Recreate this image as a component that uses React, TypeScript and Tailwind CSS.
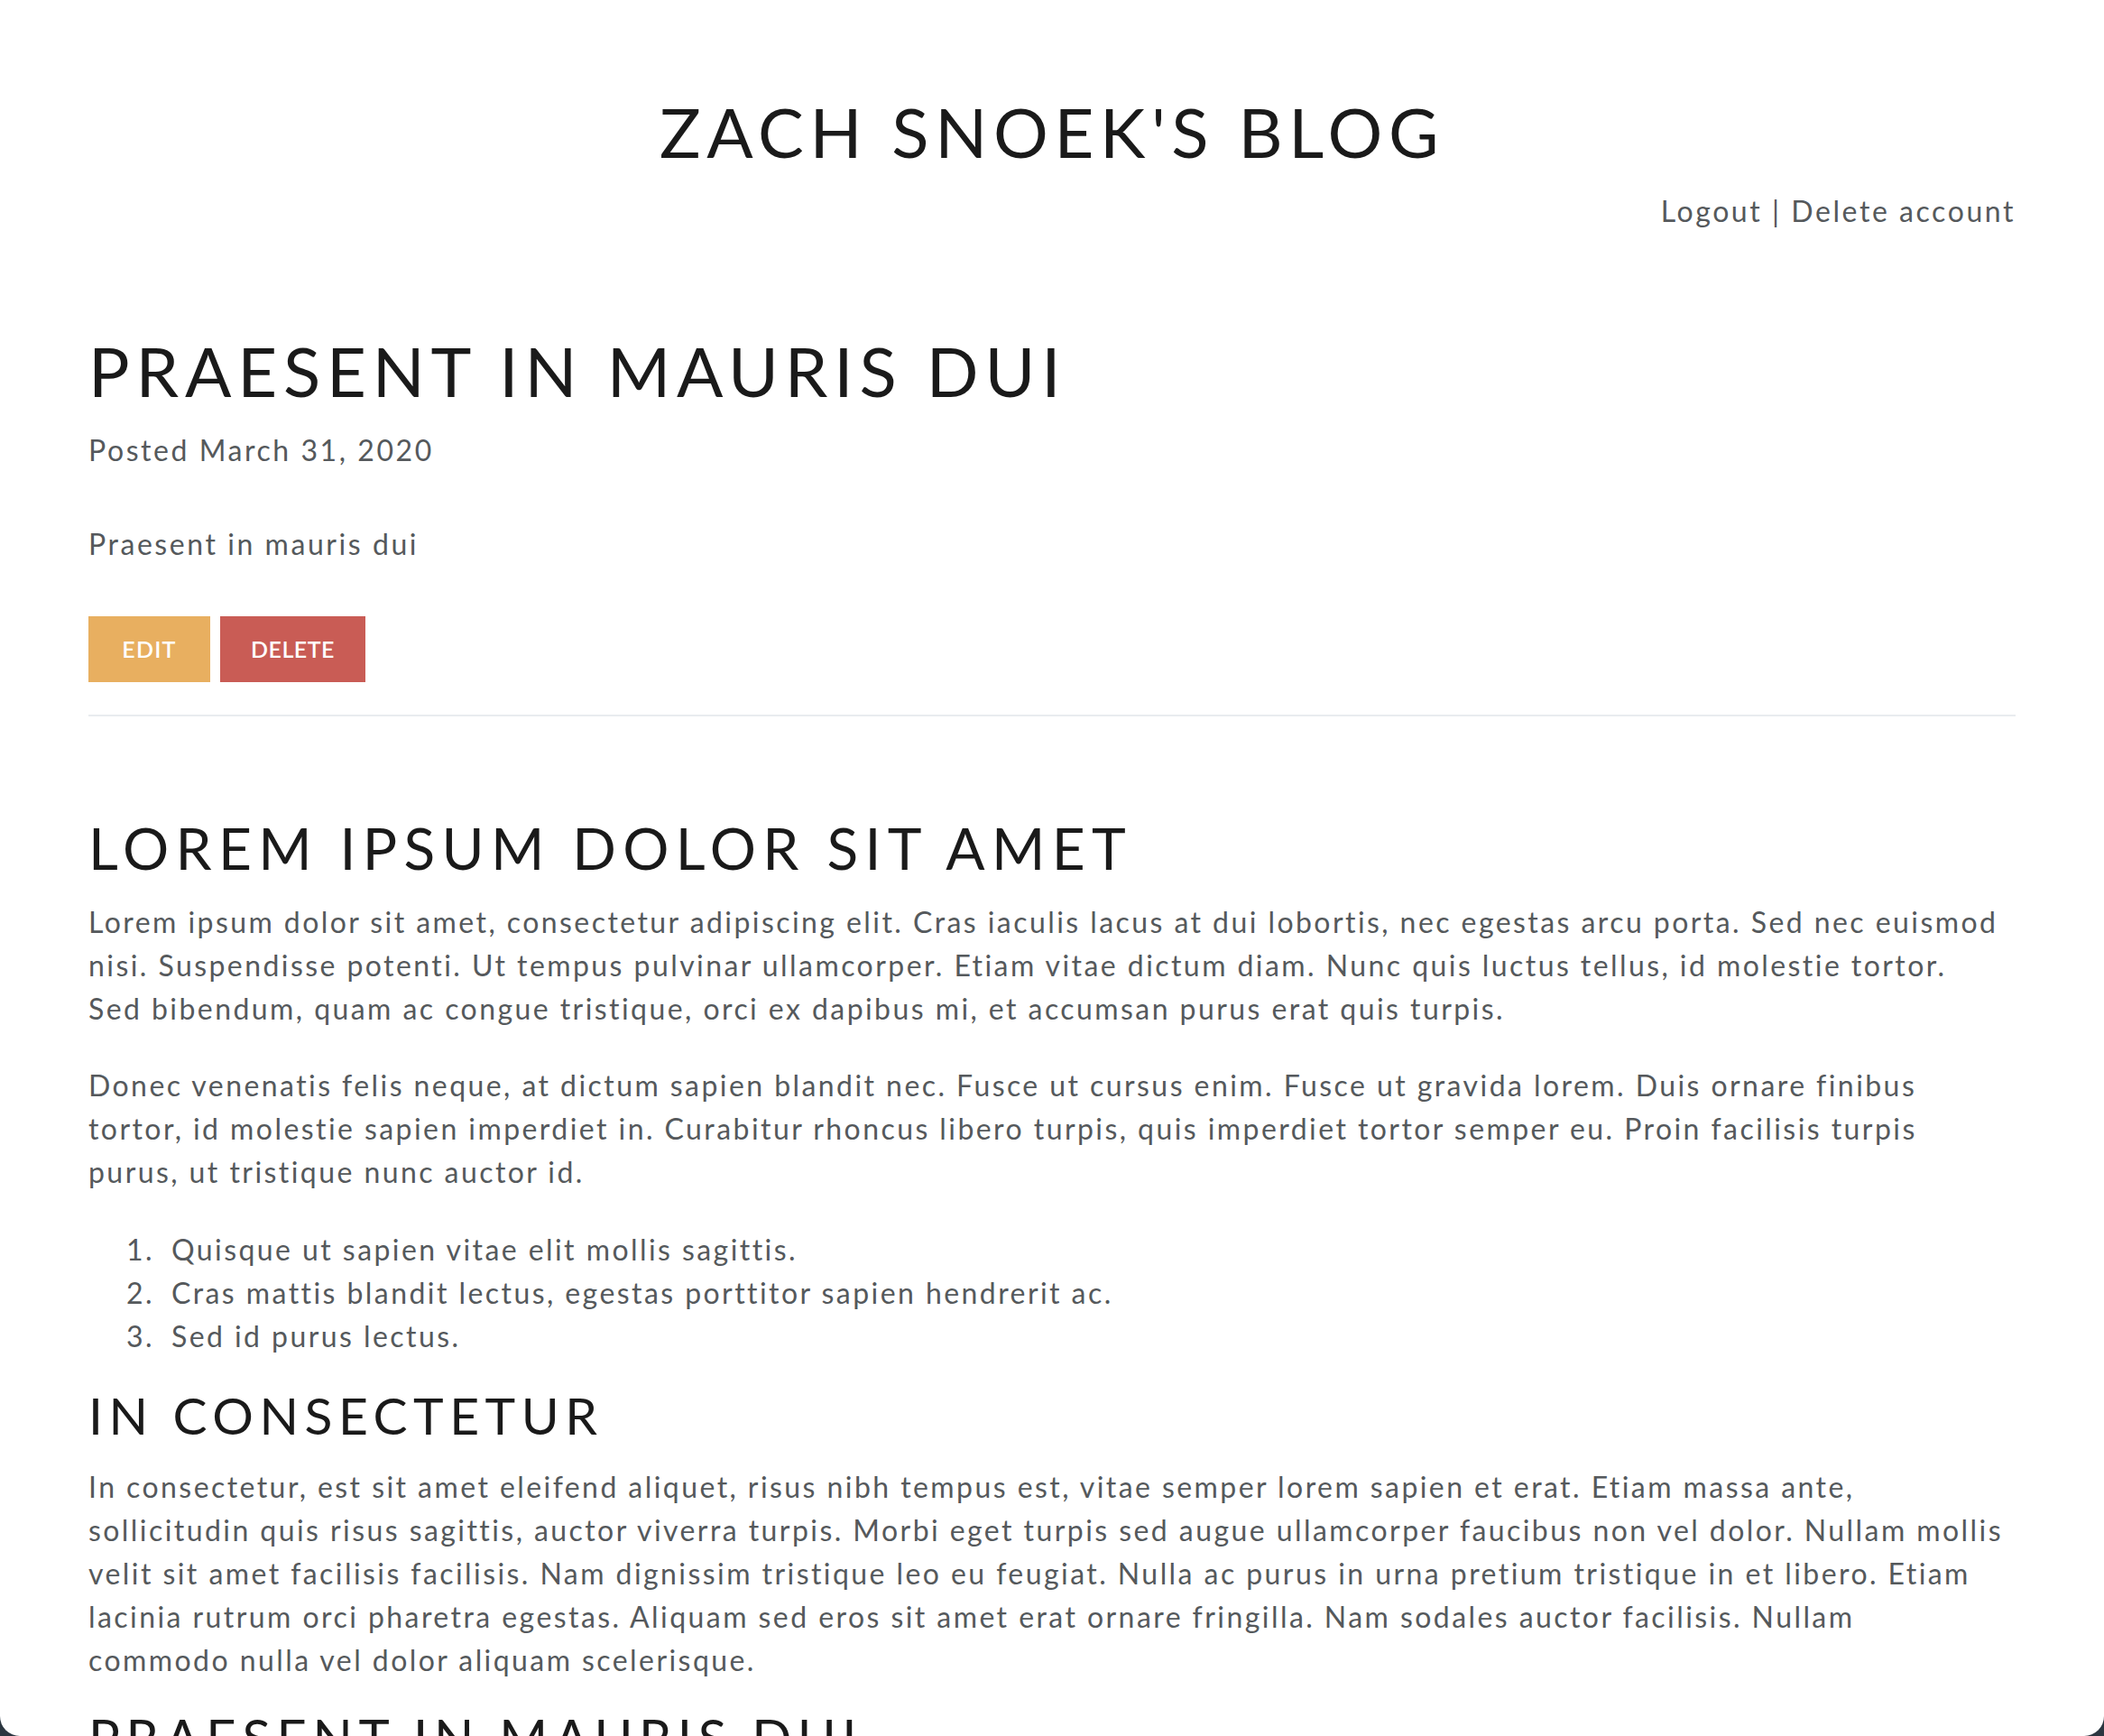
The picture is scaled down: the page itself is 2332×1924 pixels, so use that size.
const items = [
  "Quisque ut sapien vitae elit mollis sagittis.",
  "Cras mattis blandit lectus, egestas porttitor sapien hendrerit ac.",
  "Sed id purus lectus.",
];

export default function App() {
  return (
    <div className="h-[1924px] overflow-hidden bg-[#2b3640]">
      <div className="h-full rounded-b-[22px] bg-white px-[98px] font-['Lato',sans-serif] text-[#55595c]">
        {/* Header */}
        <header className="pt-[108px]">
          <h1 className="text-center text-[76px] font-normal leading-none tracking-[0.088em] text-[#1a1a1a]">
            ZACH SNOEK'S BLOG
          </h1>
          <div className="mt-[26px] text-right text-[32px] leading-[48px] tracking-[0.08em]">
            <a href="#">Logout</a> | <a href="#">Delete account</a>
          </div>
        </header>

        {/* Post */}
        <section className="mt-[115px]">
          <h2 className="text-[76px] leading-none tracking-[0.09em] text-[#1a1a1a]">PRAESENT IN MAURIS DUI</h2>
          <p className="mt-[26px] text-[32px] leading-[48px] tracking-[0.08em]">Posted March 31, 2020</p>
          <p className="mt-[56px] text-[32px] leading-[48px] tracking-[0.08em]">Praesent in mauris dui</p>
          <div className="mt-[56px] flex gap-[11px]">
            <button className="h-[73px] w-[135px] bg-[#e8af60] text-[25px] font-semibold tracking-[0.05em] text-white">
              EDIT
            </button>
            <button className="h-[73px] w-[161px] bg-[#c95c55] text-[25px] font-semibold tracking-[0.02em] text-white">
              DELETE
            </button>
          </div>
          <hr className="mt-[36px] border-t-2 border-[#e9ecef]" />
        </section>

        {/* Post body */}
        <article className="mt-[114px] text-[32px] leading-[48px] tracking-[0.076em]">
          <h2 className="mb-[26px] text-[64px] leading-none tracking-[0.114em] text-[#1a1a1a]">
            LOREM IPSUM DOLOR SIT AMET
          </h2>
          <p className="mb-[37px]">
            Lorem ipsum dolor sit amet, consectetur adipiscing elit. Cras iaculis lacus at dui lobortis, nec egestas
            arcu porta. Sed nec euismod nisi. Suspendisse potenti. Ut tempus pulvinar ullamcorper. Etiam vitae dictum
            diam. Nunc quis luctus tellus, id molestie tortor.
            <br />
            Sed bibendum, quam ac congue tristique, orci ex dapibus mi, et accumsan purus erat quis turpis.
          </p>
          <p className="mb-[38px]">
            Donec venenatis felis neque, at dictum sapien blandit nec. Fusce ut cursus enim. Fusce ut gravida lorem.
            Duis ornare finibus tortor, id molestie sapien imperdiet in. Curabitur rhoncus libero turpis, quis
            imperdiet tortor semper eu. Proin facilisis turpis purus, ut tristique nunc auctor id.
          </p>
          <ol className="mb-[35px] pl-[42px]">
            {items.map((item, i) => (
              <li key={i} className="flex">
                <span className="w-[50px] shrink-0">{i + 1}.</span>
                <span>{item}</span>
              </li>
            ))}
          </ol>
          <h3 className="mb-[27px] text-[57px] leading-none tracking-[0.114em] text-[#1a1a1a]">IN CONSECTETUR</h3>
          <p className="mb-[33px]">
            In consectetur, est sit amet eleifend aliquet, risus nibh tempus est, vitae semper lorem sapien et erat.
            Etiam massa ante, sollicitudin quis risus sagittis, auctor viverra turpis. Morbi eget turpis sed augue
            ullamcorper faucibus non vel dolor. Nullam mollis velit sit amet facilisis facilisis. Nam dignissim
            tristique leo eu feugiat. Nulla ac purus in urna pretium tristique in et libero. Etiam lacinia rutrum orci
            pharetra egestas. Aliquam sed eros sit amet erat ornare fringilla. Nam sodales auctor facilisis. Nullam
            <br />
            commodo nulla vel dolor aliquam scelerisque.
          </p>
          <h3 className="text-[58px] leading-none tracking-[0.114em] text-[#1a1a1a]">PRAESENT IN MAURIS DUI</h3>
        </article>
      </div>
    </div>
  );
}
